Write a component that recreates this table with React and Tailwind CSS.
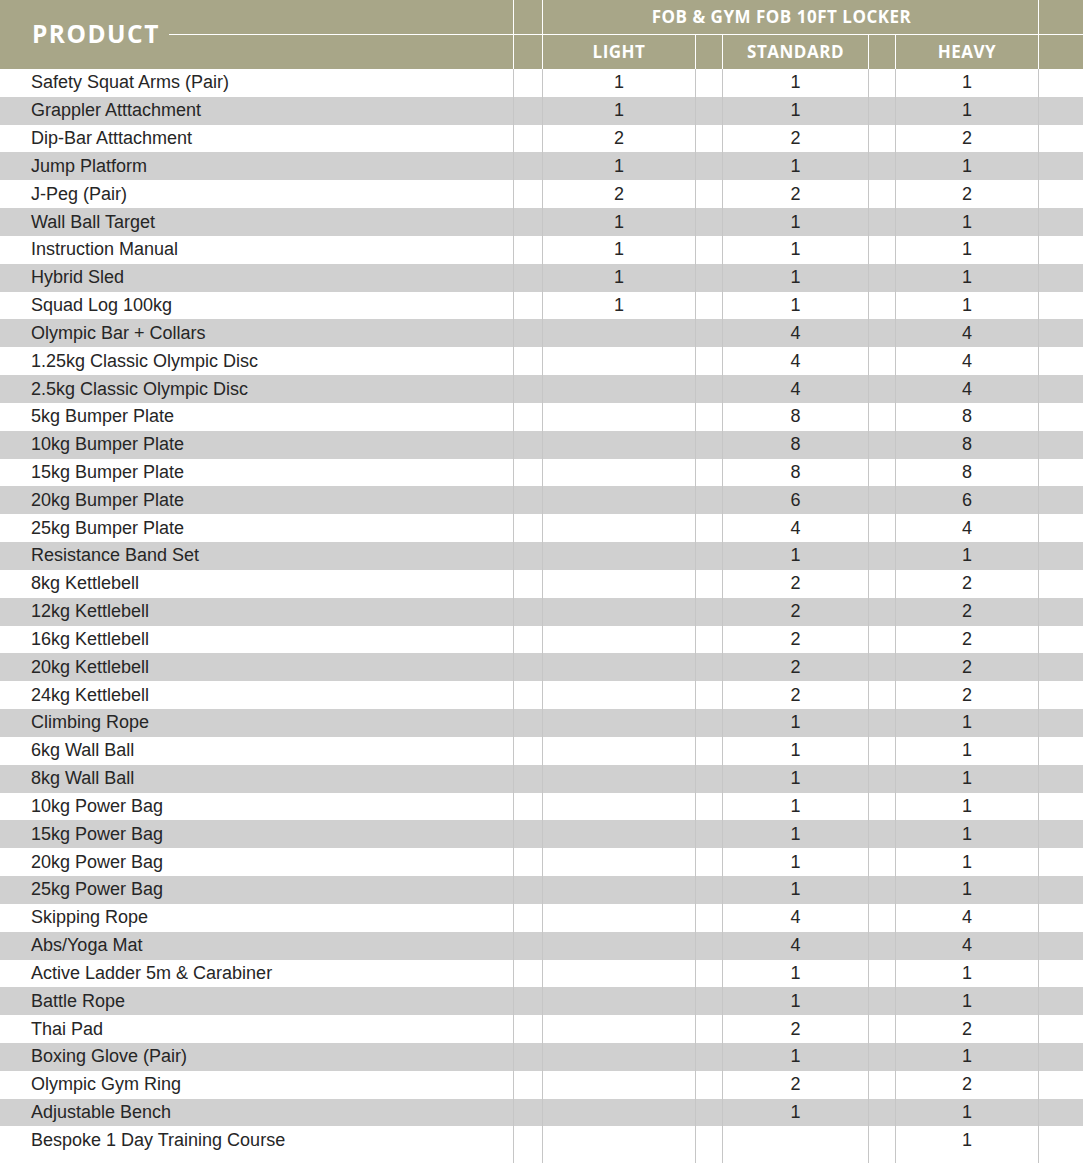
import React from "react";

const rows = [
  ["Safety Squat Arms (Pair)", "1", "1", "1"],
  ["Grappler Atttachment", "1", "1", "1"],
  ["Dip-Bar Atttachment", "2", "2", "2"],
  ["Jump Platform", "1", "1", "1"],
  ["J-Peg (Pair)", "2", "2", "2"],
  ["Wall Ball Target", "1", "1", "1"],
  ["Instruction Manual", "1", "1", "1"],
  ["Hybrid Sled", "1", "1", "1"],
  ["Squad Log 100kg", "1", "1", "1"],
  ["Olympic Bar + Collars", "", "4", "4"],
  ["1.25kg Classic Olympic Disc", "", "4", "4"],
  ["2.5kg Classic Olympic Disc", "", "4", "4"],
  ["5kg Bumper Plate", "", "8", "8"],
  ["10kg Bumper Plate", "", "8", "8"],
  ["15kg Bumper Plate", "", "8", "8"],
  ["20kg Bumper Plate", "", "6", "6"],
  ["25kg Bumper Plate", "", "4", "4"],
  ["Resistance Band Set", "", "1", "1"],
  ["8kg Kettlebell", "", "2", "2"],
  ["12kg Kettlebell", "", "2", "2"],
  ["16kg Kettlebell", "", "2", "2"],
  ["20kg Kettlebell", "", "2", "2"],
  ["24kg Kettlebell", "", "2", "2"],
  ["Climbing Rope", "", "1", "1"],
  ["6kg Wall Ball", "", "1", "1"],
  ["8kg Wall Ball", "", "1", "1"],
  ["10kg Power Bag", "", "1", "1"],
  ["15kg Power Bag", "", "1", "1"],
  ["20kg Power Bag", "", "1", "1"],
  ["25kg Power Bag", "", "1", "1"],
  ["Skipping Rope", "", "4", "4"],
  ["Abs/Yoga Mat", "", "4", "4"],
  ["Active Ladder 5m & Carabiner", "", "1", "1"],
  ["Battle Rope", "", "1", "1"],
  ["Thai Pad", "", "2", "2"],
  ["Boxing Glove (Pair)", "", "1", "1"],
  ["Olympic Gym Ring", "", "2", "2"],
  ["Adjustable Bench", "", "1", "1"],
  ["Bespoke 1 Day Training Course", "", "", "1"],
];

const cols = "grid grid-cols-[513px_29px_153px_27px_146px_27px_143px_1fr]";
const head = "font-['Open_Sans',sans-serif] font-bold text-white uppercase";

const Row = ({ item, idx }) => {
  const [name, light, std, heavy] = item;
  const line = "border-l border-[#c6c6c6]";
  return (
    <div
      className={`${cols} h-[27.84px] text-[18px] text-[#262626] ${
        idx % 2 === 1 ? "bg-[#d0d0d0]" : "bg-white"
      }`}
    >
      <div className="flex items-center pl-[31px] whitespace-nowrap">{name}</div>
      <div className={line}></div>
      <div className={`${line} flex items-center justify-center`}>{light}</div>
      <div className={line}></div>
      <div className={`${line} flex items-center justify-center`}>{std}</div>
      <div className={line}></div>
      <div className={`${line} flex items-center justify-center`}>{heavy}</div>
      <div className={line}></div>
    </div>
  );
};

export default function App() {
  const w = "border-l border-white";
  return (
    <div className="w-[1083px] h-[1163px] bg-white flex flex-col font-['Liberation_Sans',Arial,sans-serif] overflow-hidden">
      {/* header */}
      <div className={`${cols} grid-rows-[35px_34px] bg-[#a8a688]`}>
        <div className="row-span-2 flex items-center pl-[32px]">
          <span className={`${head} text-[24.5px] tracking-[0.06em] leading-none`}>Product</span>
          <div className="flex-1 h-px bg-white ml-[9px]"></div>
        </div>
        <div className={`${w} border-b`}></div>
        <div className={`${w} border-b col-span-5 flex items-center justify-center pr-[18px] ${head} text-[17px] tracking-[0.03em]`}>
          FOB &amp; GYM FOB 10FT LOCKER
        </div>
        <div className={`${w} border-b`}></div>

        <div className={w}></div>
        <div className={`${w} flex items-center justify-center ${head} text-[17px] tracking-[0.03em]`}>Light</div>
        <div className={w}></div>
        <div className={`${w} flex items-center justify-center ${head} text-[17px] tracking-[0.03em]`}>Standard</div>
        <div className={w}></div>
        <div className={`${w} flex items-center justify-center ${head} text-[17px] tracking-[0.03em]`}>Heavy</div>
        <div className={w}></div>
      </div>

      {rows.map((r, i) => (
        <Row key={r[0]} item={r} idx={i} />
      ))}

      <div className={`${cols} flex-1`}>
        <div></div>
        <div className="border-l border-[#c6c6c6]"></div>
        <div className="border-l border-[#c6c6c6]"></div>
        <div className="border-l border-[#c6c6c6]"></div>
        <div className="border-l border-[#c6c6c6]"></div>
        <div className="border-l border-[#c6c6c6]"></div>
        <div className="border-l border-[#c6c6c6]"></div>
        <div className="border-l border-[#c6c6c6]"></div>
      </div>
    </div>
  );
}
